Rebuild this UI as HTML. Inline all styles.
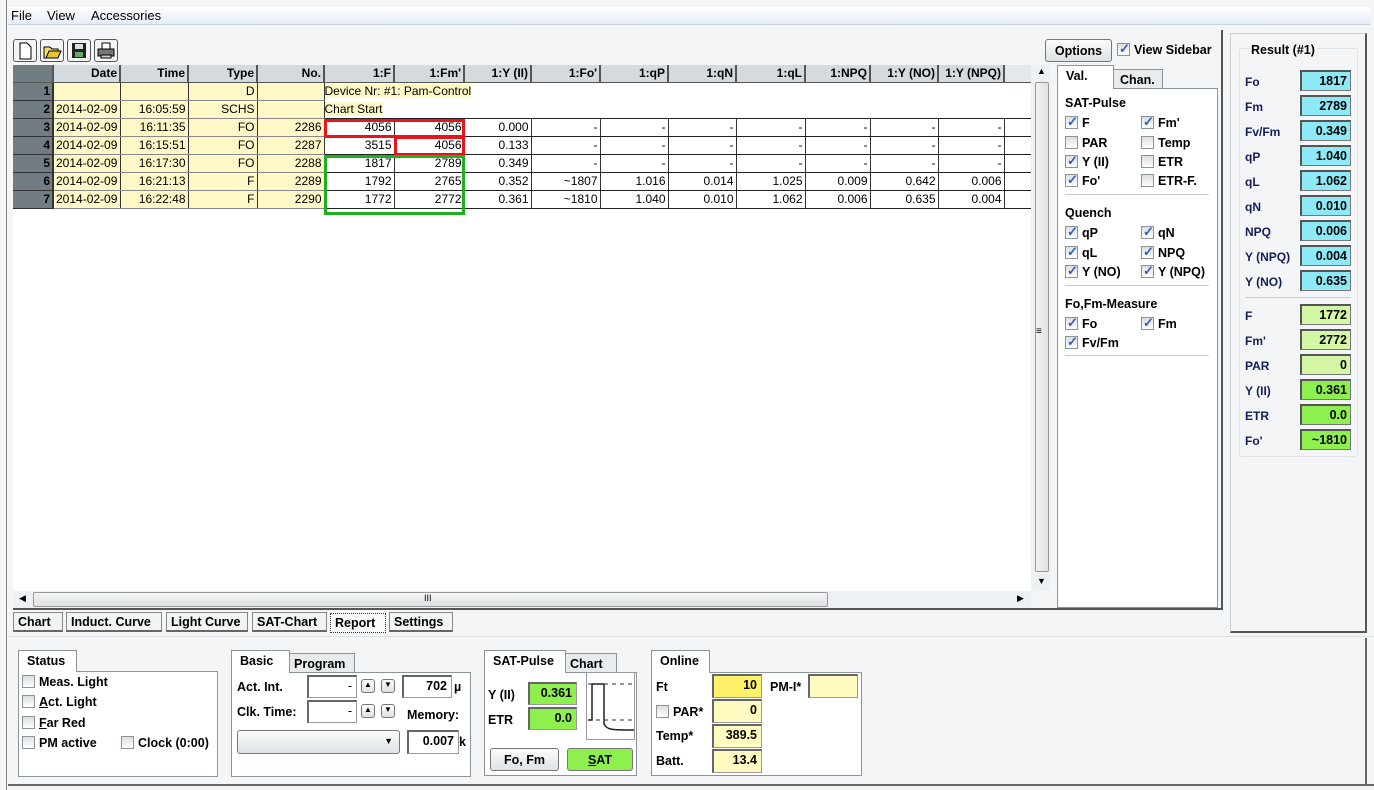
<!DOCTYPE html>
<html><head><meta charset="utf-8">
<style>
*{box-sizing:border-box;margin:0;padding:0}
body{width:1374px;height:790px;overflow:hidden;background:#f3f5f6;font-family:"Liberation Sans",Tahoma,sans-serif;font-size:12px;color:#000;position:relative}
.a{position:absolute}
.b{font-weight:bold}
.menu{left:8px;top:7px;width:1362px;height:18px;background:linear-gradient(#fff,#e4ecf7);border-bottom:1px solid #c8d2de}
.menu span{position:absolute;top:1px;font-size:13px}
.tb{top:39px;width:24px;height:23px;border:1px solid #555;border-radius:3px;background:#f4f4f4}
table.g{border-collapse:collapse;table-layout:fixed;font-size:12px}
table.g td{height:18px;padding:0 2px;text-align:right;white-space:nowrap;overflow:hidden}
table.g tr.h td{height:17px;background:#d4dadd;font-weight:bold;border-right:2px solid #555;border-bottom:1px solid #555}
td.rh{background:#717d83;font-weight:bold;border-right:2px solid #333;border-bottom:1px solid #333}
td.y{background:#fdf8c6;border-right:1px solid #333;border-bottom:1px solid #888}
tr.d td.w{border-right:1px solid #333;border-top:1px solid #222;border-bottom:1px solid #222}
.box{border:3px solid}
.tab{background:#f1f4f5;border:1px solid #888;border-bottom:2px solid #666;font-weight:bold;font-size:12.5px;padding:2px 4px;height:20px;top:612px}
.grp{border:1px solid #8a9499;background:#fff}
.gtab{border:1px solid #8a9499;border-bottom:none;font-weight:bold;padding:3px 0 0 8px;font-size:12.5px}
.cb{width:13px;height:13px;border:1px solid #8a9499;background:linear-gradient(#ddd,#fff);display:inline-block;vertical-align:-2px;margin-right:4px;position:relative}
.cb.k::after{content:"✓";position:absolute;left:1px;top:-3px;color:#2d5fc6;font-size:13px;font-weight:bold}
.lbl{font-weight:bold;font-size:12.5px;color:#000}
.rv{width:51px;height:21px;border:1px solid #777;border-top:2px solid #555;border-left:2px solid #555;text-align:right;padding:2px 3px;font-weight:bold;font-size:12.5px}
.cy{background:#8ee9f7}.lg{background:#d4f7a6}.gg{background:#8ef04f}
.rl{font-weight:bold;font-size:12px;color:#12205a}
.in{border:1px solid #999;border-top:2px solid #666;border-left:2px solid #666;background:#fff;text-align:right;font-weight:bold;padding:2px 4px;font-size:12.5px}
.yl{background:#fffbc0}
.btn{border:1px solid #777;border-radius:3px;background:linear-gradient(#fbfbfb,#dde2e5);text-align:center;font-weight:bold;font-size:12.5px}
</style></head><body>
<div class="a" style="left:6px;top:0;width:1px;height:790px;background:#888"></div>
<div class="a menu"><span style="left:3px">File</span><span style="left:39px">View</span><span style="left:83px">Accessories</span></div>

<div class="a tb" style="left:13px"><svg width="22" height="21"><path d="M6 3h7l4 4v12H6z" fill="#fff" stroke="#000"/></svg></div>
<div class="a tb" style="left:40px"><svg width="22" height="21"><path d="M3 7h6l2 2h6v9H3z" fill="#f4e070" stroke="#000"/><path d="M5 18l3-7h12l-3 7z" fill="#e8c830" stroke="#000"/></svg></div>
<div class="a tb" style="left:67px"><svg width="22" height="21"><rect x="4" y="3" width="14" height="15" fill="#222"/><rect x="7" y="4" width="8" height="5" fill="#ddd"/><rect x="7" y="12" width="8" height="5" fill="#6a6"/></svg></div>
<div class="a tb" style="left:94px"><svg width="22" height="21"><rect x="7" y="3" width="8" height="6" fill="#fff" stroke="#000"/><rect x="3" y="9" width="16" height="7" fill="#777" stroke="#000"/><rect x="6" y="15" width="10" height="3" fill="#ccc" stroke="#000"/></svg></div>

<div class="a" style="left:13px;top:65px;width:1018px;height:526px;background:#fff"></div>
<table class="g a" style="left:13px;top:65px;width:1018px">
<colgroup><col style="width:40px"><col style="width:67px"><col style="width:68px"><col style="width:69px"><col style="width:67px"><col style="width:70px"><col style="width:70px"><col style="width:67px"><col style="width:69px"><col style="width:68px"><col style="width:68px"><col style="width:69px"><col style="width:65px"><col style="width:68px"><col style="width:66px"><col style="width:27px"></colgroup>
<tr class="h"><td style="background:#717d83"></td><td>Date</td><td>Time</td><td>Type</td><td>No.</td><td>1:F</td><td>1:Fm'</td><td>1:Y (II)</td><td>1:Fo'</td><td>1:qP</td><td>1:qN</td><td>1:qL</td><td>1:NPQ</td><td>1:Y (NO)</td><td>1:Y (NPQ)</td><td style="border-right:none;background:#e4e8ea"></td></tr>
<tr><td class="rh">1</td><td class="y"></td><td class="y"></td><td class="y">D</td><td class="y"></td><td colspan="3" style="text-align:left;padding:0"><span style="background:#fdf8c6">Device Nr: #1: Pam-Control</span></td><td></td><td></td><td></td><td></td><td></td><td></td><td></td><td></td></tr>
<tr><td class="rh">2</td><td class="y" style="text-align:left">2014-02-09</td><td class="y">16:05:59</td><td class="y">SCHS</td><td class="y"></td><td colspan="2" style="text-align:left;padding:0"><span style="background:#fdf8c6">Chart Start</span></td><td></td><td></td><td></td><td></td><td></td><td></td><td></td><td></td><td></td></tr>
<tr class="d"><td class="rh">3</td><td class="y" style="text-align:left">2014-02-09</td><td class="y">16:11:35</td><td class="y">FO</td><td class="y">2286</td><td class="w">4056</td><td class="w">4056</td><td class="w">0.000</td><td class="w">-</td><td class="w">-</td><td class="w">-</td><td class="w">-</td><td class="w">-</td><td class="w">-</td><td class="w">-</td><td class="w" style="border-right:none"></td></tr>
<tr class="d"><td class="rh">4</td><td class="y" style="text-align:left">2014-02-09</td><td class="y">16:15:51</td><td class="y">FO</td><td class="y">2287</td><td class="w">3515</td><td class="w">4056</td><td class="w">0.133</td><td class="w">-</td><td class="w">-</td><td class="w">-</td><td class="w">-</td><td class="w">-</td><td class="w">-</td><td class="w">-</td><td class="w" style="border-right:none"></td></tr>
<tr class="d"><td class="rh">5</td><td class="y" style="text-align:left">2014-02-09</td><td class="y">16:17:30</td><td class="y">FO</td><td class="y">2288</td><td class="w">1817</td><td class="w">2789</td><td class="w">0.349</td><td class="w">-</td><td class="w">-</td><td class="w">-</td><td class="w">-</td><td class="w">-</td><td class="w">-</td><td class="w">-</td><td class="w" style="border-right:none"></td></tr>
<tr class="d"><td class="rh">6</td><td class="y" style="text-align:left">2014-02-09</td><td class="y">16:21:13</td><td class="y">F</td><td class="y">2289</td><td class="w">1792</td><td class="w">2765</td><td class="w">0.352</td><td class="w">~1807</td><td class="w">1.016</td><td class="w">0.014</td><td class="w">1.025</td><td class="w">0.009</td><td class="w">0.642</td><td class="w">0.006</td><td class="w" style="border-right:none"></td></tr>
<tr class="d"><td class="rh">7</td><td class="y" style="text-align:left">2014-02-09</td><td class="y">16:22:48</td><td class="y">F</td><td class="y">2290</td><td class="w">1772</td><td class="w">2772</td><td class="w">0.361</td><td class="w">~1810</td><td class="w">1.040</td><td class="w">0.010</td><td class="w">1.062</td><td class="w">0.006</td><td class="w">0.635</td><td class="w">0.004</td><td class="w" style="border-right:none"></td></tr>
</table>
<div class="a box" style="left:324px;top:119px;width:141px;height:19px;border-color:#e8141a"></div>
<div class="a box" style="left:394px;top:136px;width:71px;height:20px;border-color:#e8141a"></div>
<div class="a box" style="left:324px;top:155px;width:141px;height:60px;border-color:#1fb01f"></div>

<div class="a" style="left:1031px;top:65px;width:20px;height:526px;background:#eef1f3"></div>
<div class="a" style="left:1035px;top:82px;width:14px;height:490px;border:1px solid #999;border-radius:2px;background:linear-gradient(90deg,#f2f2f2,#dde2e4)"></div>
<div class="a" style="left:1036px;top:326px;font-size:10px">≡</div>
<div class="a" style="left:1037px;top:66px;font-size:9px">▲</div>
<div class="a" style="left:1037px;top:576px;font-size:9px">▼</div>
<div class="a" style="left:13px;top:591px;width:1018px;height:17px;background:#eef1f3"></div>
<div class="a" style="left:33px;top:592px;width:795px;height:15px;border:1px solid #999;border-radius:2px;background:linear-gradient(#f4f4f4,#dde2e4)"></div>
<div class="a" style="left:19px;top:593px;font-size:9px">◀</div>
<div class="a" style="left:1017px;top:593px;font-size:9px">▶</div>
<div class="a" style="left:424px;top:593px;font-size:9px">III</div>
<div class="a" style="left:13px;top:608px;width:1210px;height:2px;background:#555"></div>
<div class="a" style="left:1221px;top:30px;width:2px;height:580px;background:#555"></div>

<div class="a btn" style="left:1045px;top:39px;width:67px;height:23px;padding-top:4px">Options</div>
<div class="a lbl" style="left:1117px;top:43px"><span class="cb k"></span>View Sidebar</div>
<div class="a gtab" style="left:1057px;top:65px;width:57px;height:24px;background:#fff;z-index:2">Val.</div>
<div class="a gtab" style="left:1113px;top:69px;width:50px;height:20px;background:#e8ecee;padding-left:6px">Chan.</div>
<div class="a grp" style="left:1057px;top:88px;width:161px;height:520px"></div>
<div class="a lbl" style="left:1065px;top:96px">SAT-Pulse</div>
<div class="a lbl" style="left:1065px;top:116px"><span class="cb k"></span>F</div>
<div class="a lbl" style="left:1141px;top:116px"><span class="cb k"></span>Fm'</div>
<div class="a lbl" style="left:1065px;top:136px"><span class="cb"></span>PAR</div>
<div class="a lbl" style="left:1141px;top:136px"><span class="cb"></span>Temp</div>
<div class="a lbl" style="left:1065px;top:155px"><span class="cb k"></span>Y (II)</div>
<div class="a lbl" style="left:1141px;top:155px"><span class="cb"></span>ETR</div>
<div class="a lbl" style="left:1065px;top:174px"><span class="cb k"></span>Fo'</div>
<div class="a lbl" style="left:1141px;top:174px"><span class="cb"></span>ETR-F.</div>
<div class="a" style="left:1065px;top:194px;width:144px;height:1px;background:#c5ccd0"></div>
<div class="a lbl" style="left:1065px;top:206px">Quench</div>
<div class="a lbl" style="left:1065px;top:226px"><span class="cb k"></span>qP</div>
<div class="a lbl" style="left:1141px;top:226px"><span class="cb k"></span>qN</div>
<div class="a lbl" style="left:1065px;top:246px"><span class="cb k"></span>qL</div>
<div class="a lbl" style="left:1141px;top:246px"><span class="cb k"></span>NPQ</div>
<div class="a lbl" style="left:1065px;top:265px"><span class="cb k"></span>Y (NO)</div>
<div class="a lbl" style="left:1141px;top:265px"><span class="cb k"></span>Y (NPQ)</div>
<div class="a" style="left:1065px;top:285px;width:144px;height:1px;background:#c5ccd0"></div>
<div class="a lbl" style="left:1065px;top:297px">Fo,Fm-Measure</div>
<div class="a lbl" style="left:1065px;top:317px"><span class="cb k"></span>Fo</div>
<div class="a lbl" style="left:1141px;top:317px"><span class="cb k"></span>Fm</div>
<div class="a lbl" style="left:1065px;top:336px"><span class="cb k"></span>Fv/Fm</div>
<div class="a" style="left:1065px;top:355px;width:144px;height:1px;background:#c5ccd0"></div>

<div class="a" style="left:1230px;top:33px;width:137px;height:600px;border:1px solid #c8ced2;border-right:2px solid #555;border-bottom:2px solid #555"></div>
<div class="a" style="left:1239px;top:48px;width:119px;height:409px;border:1px solid #dde3e6;border-radius:3px"></div>
<div class="a lbl" style="left:1249px;top:43px;background:#f3f5f6;padding:0 2px">Result (#1)</div>
<div class="a rl" style="left:1245px;top:75px">Fo</div><div class="a rv cy" style="left:1300px;top:70px">1817</div>
<div class="a rl" style="left:1245px;top:100px">Fm</div><div class="a rv cy" style="left:1300px;top:95px">2789</div>
<div class="a rl" style="left:1245px;top:125px">Fv/Fm</div><div class="a rv cy" style="left:1300px;top:120px">0.349</div>
<div class="a rl" style="left:1245px;top:150px">qP</div><div class="a rv cy" style="left:1300px;top:145px">1.040</div>
<div class="a rl" style="left:1245px;top:175px">qL</div><div class="a rv cy" style="left:1300px;top:170px">1.062</div>
<div class="a rl" style="left:1245px;top:200px">qN</div><div class="a rv cy" style="left:1300px;top:195px">0.010</div>
<div class="a rl" style="left:1245px;top:225px">NPQ</div><div class="a rv cy" style="left:1300px;top:220px">0.006</div>
<div class="a rl" style="left:1245px;top:250px">Y (NPQ)</div><div class="a rv cy" style="left:1300px;top:245px">0.004</div>
<div class="a rl" style="left:1245px;top:275px">Y (NO)</div><div class="a rv cy" style="left:1300px;top:270px">0.635</div>
<div class="a" style="left:1245px;top:297px;width:106px;height:1px;background:#c8ced2"></div>
<div class="a rl" style="left:1245px;top:309px">F</div><div class="a rv lg" style="left:1300px;top:304px">1772</div>
<div class="a rl" style="left:1245px;top:334px">Fm'</div><div class="a rv lg" style="left:1300px;top:329px">2772</div>
<div class="a rl" style="left:1245px;top:359px">PAR</div><div class="a rv lg" style="left:1300px;top:354px">0</div>
<div class="a rl" style="left:1245px;top:384px">Y (II)</div><div class="a rv gg" style="left:1300px;top:379px">0.361</div>
<div class="a rl" style="left:1245px;top:409px">ETR</div><div class="a rv gg" style="left:1300px;top:404px">0.0</div>
<div class="a rl" style="left:1245px;top:434px">Fo'</div><div class="a rv gg" style="left:1300px;top:429px">~1810</div>

<div class="a tab" style="left:13px;width:50px">Chart</div>
<div class="a tab" style="left:66px;width:96px">Induct. Curve</div>
<div class="a tab" style="left:166px;width:82px">Light Curve</div>
<div class="a tab" style="left:252px;width:75px">SAT-Chart</div>
<div class="a tab" style="left:330px;width:56px;top:613px;border:1px dotted #333;background:#f7f9fa">Report</div>
<div class="a tab" style="left:389px;width:64px">Settings</div>
<div class="a" style="left:8px;top:636px;width:1366px;height:1px;background:#dde2e5"></div>
<div class="a" style="left:8px;top:784px;width:1366px;height:2px;background:#666"></div>
<div class="a" style="left:1365px;top:638px;width:2px;height:148px;background:#666"></div>

<div class="a gtab" style="left:18px;top:650px;width:59px;height:22px;background:#fff;z-index:2">Status</div>
<div class="a grp" style="left:18px;top:671px;width:200px;height:106px"></div>
<div class="a lbl" style="left:22px;top:675px"><span class="cb"></span>Meas. Light</div>
<div class="a lbl" style="left:22px;top:695px"><span class="cb"></span><u>A</u>ct. Light</div>
<div class="a lbl" style="left:22px;top:716px"><span class="cb"></span><u>F</u>ar Red</div>
<div class="a lbl" style="left:22px;top:736px"><span class="cb"></span>PM active</div>
<div class="a lbl" style="left:121px;top:736px"><span class="cb"></span>Clock (0:00)</div>

<div class="a gtab" style="left:231px;top:650px;width:59px;height:23px;background:#fff;z-index:2">Basic</div>
<div class="a gtab" style="left:289px;top:653px;width:66px;height:19px;background:#e8ecee;padding-left:4px">Program</div>
<div class="a grp" style="left:231px;top:672px;width:240px;height:105px"></div>
<div class="a lbl" style="left:237px;top:680px">Act. Int.</div>
<div class="a lbl" style="left:237px;top:705px">Clk. Time:</div>
<div class="a in" style="left:307px;top:675px;width:50px;height:23px;font-weight:normal">-</div>
<div class="a in" style="left:307px;top:700px;width:50px;height:23px;font-weight:normal">-</div>
<div class="a btn" style="left:361px;top:679px;width:14px;height:14px;font-size:8px">▲</div>
<div class="a btn" style="left:381px;top:679px;width:14px;height:14px;font-size:8px">▼</div>
<div class="a btn" style="left:361px;top:704px;width:14px;height:14px;font-size:8px">▲</div>
<div class="a btn" style="left:381px;top:704px;width:14px;height:14px;font-size:8px">▼</div>
<div class="a in" style="left:402px;top:675px;width:50px;height:23px">702</div>
<div class="a lbl" style="left:454px;top:680px">µ</div>
<div class="a lbl" style="left:407px;top:708px">Memory:</div>
<div class="a btn" style="left:237px;top:730px;width:163px;height:24px;text-align:right;padding:5px 6px 0 0;font-size:9px">▼</div>
<div class="a in" style="left:407px;top:730px;width:52px;height:24px">0.007</div>
<div class="a lbl" style="left:459px;top:735px">k</div>

<div class="a gtab" style="left:484px;top:650px;width:82px;height:23px;background:#fff;z-index:2">SAT-Pulse</div>
<div class="a gtab" style="left:565px;top:653px;width:52px;height:19px;background:#e8ecee;padding-left:4px">Chart</div>
<div class="a grp" style="left:484px;top:672px;width:153px;height:104px"></div>
<div class="a lbl" style="left:488px;top:688px">Y (II)</div>
<div class="a lbl" style="left:488px;top:713px">ETR</div>
<div class="a in" style="left:528px;top:682px;width:49px;height:23px;background:#8ef04f">0.361</div>
<div class="a in" style="left:528px;top:707px;width:49px;height:23px;background:#8ef04f">0.0</div>
<svg class="a" style="left:586px;top:672px" width="49" height="68"><rect x="0.5" y="0.5" width="48" height="67" fill="#fff" stroke="#999"/><path d="M2 12h46M2 48h46" stroke="#333" stroke-dasharray="4 4"/><path d="M2 48h4V12h12v40c3 6 8 6 30 6" fill="none" stroke="#222" stroke-width="1.5"/></svg>
<div class="a btn" style="left:490px;top:748px;width:69px;height:23px;padding-top:4px">Fo, Fm</div>
<div class="a btn" style="left:567px;top:748px;width:66px;height:23px;padding-top:4px;background:#8ef04f"><u>S</u>AT</div>

<div class="a gtab" style="left:651px;top:650px;width:59px;height:23px;background:#fff;z-index:2">Online</div>
<div class="a grp" style="left:651px;top:672px;width:211px;height:104px"></div>
<div class="a lbl" style="left:656px;top:680px">Ft</div>
<div class="a in" style="left:712px;top:674px;width:50px;height:24px;background:#fff26a">10</div>
<div class="a lbl" style="left:770px;top:680px">PM-I*</div>
<div class="a in" style="left:808px;top:674px;width:50px;height:24px;background:#fffbc0"></div>
<div class="a lbl" style="left:656px;top:705px"><span class="cb"></span>PAR*</div>
<div class="a in yl" style="left:712px;top:699px;width:50px;height:24px">0</div>
<div class="a lbl" style="left:656px;top:729px">Temp*</div>
<div class="a in yl" style="left:712px;top:724px;width:50px;height:24px">389.5</div>
<div class="a lbl" style="left:656px;top:754px">Batt.</div>
<div class="a in yl" style="left:712px;top:749px;width:50px;height:24px">13.4</div>
</body></html>
